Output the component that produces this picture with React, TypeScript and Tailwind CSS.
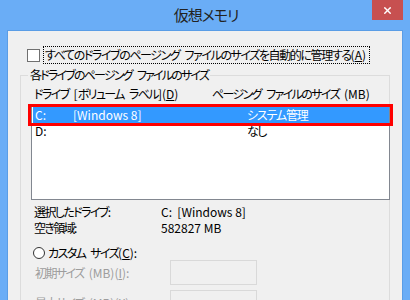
import { X } from 'lucide-react'

const font = "font-['Noto_Sans_CJK_JP','Noto_Sans',sans-serif] [font-feature-settings:'palt']"

// latin pieces keep normal spacing, kana text is squeezed to look like Meiryo UI
function L({ children }: { children: React.ReactNode }) {
  return <span className="tracking-normal">{children}</span>
}

// word gap between kana words
function S() {
  return <span className="inline-block w-[5px]" />
}

export default function App() {
  return (
    <div className={`w-[410px] h-[300px] overflow-hidden bg-[#6aadf6] text-[12px] leading-[16px] text-black whitespace-nowrap tracking-[-1.6px] ${font}`}>
      {/* title bar */}
      <div className="relative h-[30px] flex items-center justify-center">
        <span className="text-[15px] leading-[20px] text-[#222] tracking-[-1px] pl-[2px]">仮想メモリ</span>
        <div className="absolute right-[7px] top-0 w-[31px] h-[20px] bg-[#c75050] flex items-center justify-center">
          <X size={11} strokeWidth={3.2} color="white" />
        </div>
      </div>

      {/* client */}
      <div className="ml-[7px] w-[396px] h-[270px] bg-[#f0f0f0] border border-b-0 border-[#5a9de6] flex flex-col">
        <div className="mt-[15px] ml-[19px] flex items-center h-[18px]">
          <div className="w-[13px] h-[13px] border border-[#707070] bg-white" />
          <div className="ml-[3px] h-[18px] w-[327px] border border-dotted border-black px-[1px] flex items-center tracking-[-1.4px]">
            すべてのドライブのページング<S />ファイルのサイズを自動的に管理する<L>(<span className="underline">A</span>)</L>
          </div>
        </div>

        <fieldset className="mt-[3px] ml-[12px] w-[370px] h-[300px] border border-[#dcdcdc] min-w-0">
          <legend className="ml-[7px] px-[2px] leading-[16px] tracking-[-1.8px]">各ドライブのページング<S />ファイルのサイズ</legend>

          <div className="mt-[3px] pl-[13px] flex">
            <span className="w-[178px]">ドライブ<S /><L>[</L>ボリューム<S />ラベル<L>](<span className="underline">D</span>)</L></span>
            <span>ページング<S />ファイルのサイズ<S /><L>(MB)</L></span>
          </div>

          <div className="relative mt-[2px] ml-[10px] w-[359px] h-[96px] border border-[#828790] bg-white pt-[2px]">
            <div className="ml-[1px] h-[16px] flex items-center bg-[#3399ff] text-white pl-[2px]">
              <span className="w-[38px] tracking-normal">C:</span>
              <span className="w-[174px] tracking-normal">[Windows 8]</span>
              <span className="tracking-[-1.2px]">システム管理</span>
            </div>
            <div className="ml-[1px] h-[16px] flex items-center pl-[2px]">
              <span className="w-[38px] tracking-normal">D:</span>
              <span className="w-[174px]"></span>
              <span>なし</span>
            </div>
            <div className="absolute -top-[1px] -left-[4px] -right-[4px] h-[22px] border-[3px] border-[#ff0000]" />
          </div>

          <div className="mt-[4px] pl-[13px] flex">
            <span className="w-[127px]">選択したドライブ<L>:</L></span>
            <span className="tracking-normal">C:&nbsp;&nbsp;[Windows 8]</span>
          </div>
          <div className="pl-[13px] flex">
            <span className="w-[127px]">空き領域<L>:</L></span>
            <span className="tracking-normal">582827 MB</span>
          </div>

          <div className="mt-[9px] pl-[12px] flex items-center h-[15px]">
            <div className="w-[12px] h-[12px] rounded-full border border-[#333] bg-white" />
            <span className="ml-[3px]">カスタム<S />サイズ<L>(<span className="underline">C</span>):</L></span>
          </div>

          <div className="pl-[14px] flex items-center h-[25px] text-[#9d9d9d]">
            <span className="w-[135px]">初期サイズ<S /><L>(MB)(<span className="underline">I</span>):</L></span>
            <div className="w-[87px] h-[25px] border border-[#d9d9d9] bg-[#f0f0f0]" />
          </div>
          <div className="mt-[5px] pl-[14px] flex items-center h-[25px] text-[#9d9d9d]">
            <span className="w-[135px]">最大サイズ<S /><L>(MB)(<span className="underline">X</span>):</L></span>
            <div className="w-[87px] h-[25px] border border-[#d9d9d9] bg-[#f0f0f0]" />
          </div>
        </fieldset>
      </div>
    </div>
  )
}
